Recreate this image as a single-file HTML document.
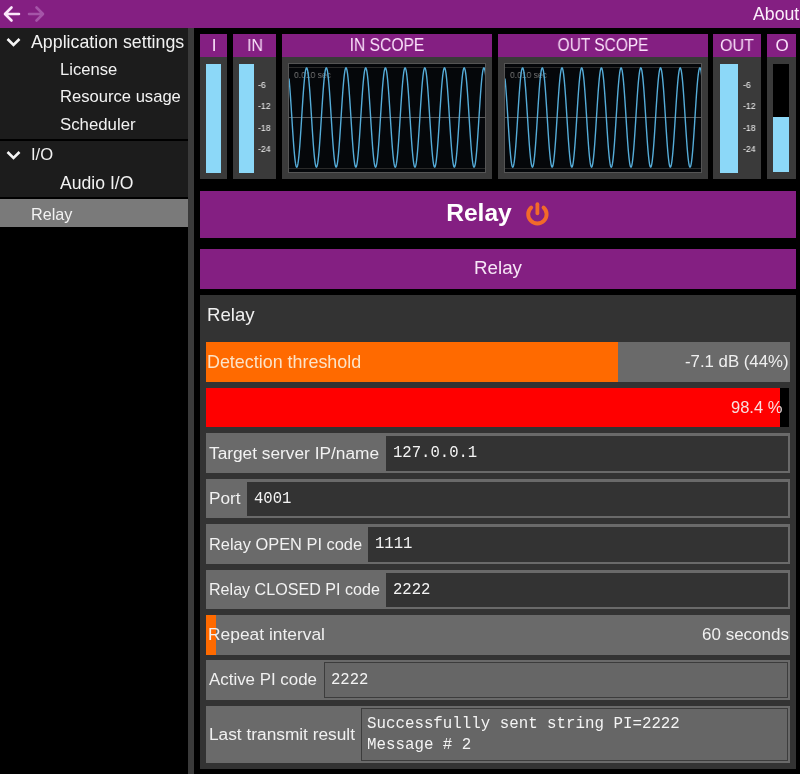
<!DOCTYPE html>
<html><head><meta charset="utf-8"><style>
html,body{margin:0;padding:0;width:800px;height:774px;overflow:hidden;background:#000;}
body>div,body>svg{position:absolute;}
body>div{will-change:transform;}
</style></head><body>
<div style="left:0px;top:0px;width:800px;height:28px;background:#841f82;"></div>
<svg style="left:0;top:0" width="60" height="28"><path d="M11.5 7.5 L5 14 L11.5 20.5 M5.5 14 H19" stroke="#fbe8fb" stroke-width="2.6" fill="none" stroke-linecap="round" stroke-linejoin="round"/><path d="M36.5 7.5 L43 14 L36.5 20.5 M42.5 14 H29" stroke="#a555a8" stroke-width="2.6" fill="none" stroke-linecap="round" stroke-linejoin="round"/></svg>
<div style="right:1px;text-align:right;top:6.22px;font-family:'Liberation Sans', sans-serif;font-size:17.7px;line-height:17.7px;color:#fbeefb;font-weight:400;white-space:pre;">About</div>
<div style="left:0px;top:28px;width:188px;height:111px;background:#1c1c1c;"></div>
<div style="left:0px;top:141px;width:188px;height:56px;background:#1c1c1c;"></div>
<div style="left:0px;top:199px;width:188px;height:28px;background:#7a7a7a;"></div>
<div style="left:188px;top:28px;width:6px;height:746px;background:#3a3a3a;"></div>
<svg style="left:6px;top:36.5px" width="20" height="12"><path d="M1.5 2 L7.5 8 L13.5 2" stroke="#f4f4f4" stroke-width="2.6" fill="none"/></svg>
<svg style="left:6px;top:150px" width="20" height="12"><path d="M1.5 2 L7.5 8 L13.5 2" stroke="#f4f4f4" stroke-width="2.6" fill="none"/></svg>
<div style="left:31px;top:33.68px;font-family:'Liberation Sans', sans-serif;font-size:17.8px;line-height:17.8px;color:#f2f2f2;font-weight:400;white-space:pre;">Application settings</div>
<div style="left:60px;top:62.15px;font-family:'Liberation Sans', sans-serif;font-size:16.6px;line-height:16.6px;color:#f2f2f2;font-weight:400;white-space:pre;">License</div>
<div style="left:60px;top:89.45px;font-family:'Liberation Sans', sans-serif;font-size:16.6px;line-height:16.6px;color:#f2f2f2;font-weight:400;white-space:pre;">Resource usage</div>
<div style="left:60px;top:116.98px;font-family:'Liberation Sans', sans-serif;font-size:16.8px;line-height:16.8px;color:#f2f2f2;font-weight:400;white-space:pre;">Scheduler</div>
<div style="left:31px;top:146.95px;font-family:'Liberation Sans', sans-serif;font-size:16.6px;line-height:16.6px;color:#f2f2f2;font-weight:400;white-space:pre;">I/O</div>
<div style="left:60px;top:174.60px;font-family:'Liberation Sans', sans-serif;font-size:17.6px;line-height:17.6px;color:#f2f2f2;font-weight:400;white-space:pre;">Audio I/O</div>
<div style="left:31px;top:205.79px;font-family:'Liberation Sans', sans-serif;font-size:16.2px;line-height:16.2px;color:#f2f2f2;font-weight:400;white-space:pre;">Relay</div>
<div style="left:200px;top:34px;width:27px;height:23px;background:#841f82;"></div>
<div style="left:200px;top:57px;width:27px;height:122px;background:#3a3a3a;"></div>
<div style="left:-86.5px;width:600px;text-align:center;top:37.01px;font-family:'Liberation Sans', sans-serif;font-size:17px;line-height:17px;color:#fbe2fb;font-weight:400;white-space:pre;">I</div>
<div style="left:233px;top:34px;width:43px;height:23px;background:#841f82;"></div>
<div style="left:233px;top:57px;width:43px;height:122px;background:#3a3a3a;"></div>
<div style="left:-45.5px;width:600px;text-align:center;top:37.01px;font-family:'Liberation Sans', sans-serif;font-size:17px;line-height:17px;color:#fbe2fb;font-weight:400;white-space:pre;transform:scaleX(0.93);transform-origin:center 50%;">IN</div>
<div style="left:282px;top:34px;width:210px;height:23px;background:#841f82;"></div>
<div style="left:282px;top:57px;width:210px;height:122px;background:#3a3a3a;"></div>
<div style="left:87.0px;width:600px;text-align:center;top:37.33px;font-family:'Liberation Sans', sans-serif;font-size:17.8px;line-height:17.8px;color:#fbe2fb;font-weight:400;white-space:pre;transform:scaleX(0.88);transform-origin:center 50%;">IN SCOPE</div>
<div style="left:498px;top:34px;width:210px;height:23px;background:#841f82;"></div>
<div style="left:498px;top:57px;width:210px;height:122px;background:#3a3a3a;"></div>
<div style="left:303.0px;width:600px;text-align:center;top:37.33px;font-family:'Liberation Sans', sans-serif;font-size:17.8px;line-height:17.8px;color:#fbe2fb;font-weight:400;white-space:pre;transform:scaleX(0.87);transform-origin:center 50%;">OUT SCOPE</div>
<div style="left:713px;top:34px;width:48px;height:23px;background:#841f82;"></div>
<div style="left:713px;top:57px;width:48px;height:122px;background:#3a3a3a;"></div>
<div style="left:437.0px;width:600px;text-align:center;top:37.01px;font-family:'Liberation Sans', sans-serif;font-size:17px;line-height:17px;color:#fbe2fb;font-weight:400;white-space:pre;transform:scaleX(0.94);transform-origin:center 50%;">OUT</div>
<div style="left:767px;top:34px;width:29px;height:23px;background:#841f82;"></div>
<div style="left:767px;top:57px;width:29px;height:122px;background:#3a3a3a;"></div>
<div style="left:481.5px;width:600px;text-align:center;top:37.01px;font-family:'Liberation Sans', sans-serif;font-size:17px;line-height:17px;color:#fbe2fb;font-weight:400;white-space:pre;">O</div>
<div style="left:206px;top:64px;width:15px;height:109px;background:#8cd8f8;"></div>
<div style="left:239px;top:64px;width:15px;height:109px;background:#8cd8f8;"></div>
<div style="left:720px;top:64px;width:18px;height:109px;background:#8cd8f8;"></div>
<div style="left:773px;top:64px;width:16px;height:108px;background:#000;"></div>
<div style="left:773px;top:117px;width:16px;height:55px;background:#8cd8f8;"></div>
<div style="left:258px;top:81.23px;font-family:'Liberation Sans', sans-serif;font-size:9.3px;line-height:9.3px;color:#f4f4f4;font-weight:400;white-space:pre;transform:scaleX(0.94);transform-origin:left 50%;">-6</div>
<div style="left:258px;top:102.43px;font-family:'Liberation Sans', sans-serif;font-size:9.3px;line-height:9.3px;color:#f4f4f4;font-weight:400;white-space:pre;transform:scaleX(0.94);transform-origin:left 50%;">-12</div>
<div style="left:258px;top:124.33px;font-family:'Liberation Sans', sans-serif;font-size:9.3px;line-height:9.3px;color:#f4f4f4;font-weight:400;white-space:pre;transform:scaleX(0.94);transform-origin:left 50%;">-18</div>
<div style="left:258px;top:145.43px;font-family:'Liberation Sans', sans-serif;font-size:9.3px;line-height:9.3px;color:#f4f4f4;font-weight:400;white-space:pre;transform:scaleX(0.94);transform-origin:left 50%;">-24</div>
<div style="left:743px;top:81.23px;font-family:'Liberation Sans', sans-serif;font-size:9.3px;line-height:9.3px;color:#f4f4f4;font-weight:400;white-space:pre;transform:scaleX(0.94);transform-origin:left 50%;">-6</div>
<div style="left:743px;top:102.43px;font-family:'Liberation Sans', sans-serif;font-size:9.3px;line-height:9.3px;color:#f4f4f4;font-weight:400;white-space:pre;transform:scaleX(0.94);transform-origin:left 50%;">-12</div>
<div style="left:743px;top:124.33px;font-family:'Liberation Sans', sans-serif;font-size:9.3px;line-height:9.3px;color:#f4f4f4;font-weight:400;white-space:pre;transform:scaleX(0.94);transform-origin:left 50%;">-18</div>
<div style="left:743px;top:145.43px;font-family:'Liberation Sans', sans-serif;font-size:9.3px;line-height:9.3px;color:#f4f4f4;font-weight:400;white-space:pre;transform:scaleX(0.94);transform-origin:left 50%;">-24</div>
<div style="left:288px;top:63px;width:198px;height:110px;background:#05070a;box-shadow:inset 0 0 0 1px #555;"></div>
<div style="left:289px;top:67px;width:196px;height:1px;background:#2a2a2a;"></div>
<div style="left:289px;top:117px;width:196px;height:1px;background:#5a5a5a;"></div>
<div style="left:289px;top:168px;width:196px;height:1px;background:#2a2a2a;"></div>
<div style="left:294px;top:69.92px;font-family:'Liberation Sans', sans-serif;font-size:9.9px;line-height:9.9px;color:#747474;font-weight:400;white-space:pre;transform:scaleX(0.86);transform-origin:left 50%;">0.010 sec</div>
<svg style="left:288.5px;top:63px" width="196.5" height="110"><polyline points="0.00,15.62 0.25,18.19 0.50,21.00 0.75,24.02 1.00,27.23 1.25,30.62 1.50,34.16 1.75,37.83 2.00,41.60 2.25,45.45 2.50,49.37 2.75,53.31 3.00,57.27 3.25,61.20 3.50,65.10 3.75,68.92 4.00,72.66 4.25,76.27 4.50,79.76 4.75,83.08 5.00,86.21 5.25,89.15 5.50,91.87 5.75,94.35 6.00,96.57 6.25,98.53 6.50,100.21 6.75,101.60 7.00,102.69 7.25,103.47 7.50,103.94 7.75,104.10 8.00,103.94 8.25,103.47 8.50,102.69 8.75,101.60 9.00,100.21 9.25,98.53 9.50,96.57 9.75,94.35 10.00,91.87 10.25,89.15 10.50,86.21 10.75,83.08 11.00,79.76 11.25,76.27 11.50,72.66 11.75,68.92 12.00,65.10 12.25,61.20 12.50,57.27 12.75,53.31 13.00,49.37 13.25,45.45 13.50,41.60 13.75,37.83 14.00,34.16 14.25,30.62 14.50,27.23 14.75,24.02 15.00,21.00 15.25,18.19 15.50,15.62 15.75,13.29 16.00,11.22 16.25,9.43 16.50,7.92 16.75,6.71 17.00,5.81 17.25,5.21 17.50,4.93 17.75,4.96 18.00,5.30 18.25,5.96 18.50,6.93 18.75,8.20 19.00,9.76 19.25,11.61 19.50,13.73 19.75,16.11 20.00,18.74 20.25,21.59 20.50,24.65 20.75,27.90 21.00,31.32 21.25,34.88 21.50,38.57 21.75,42.36 22.00,46.23 22.25,50.16 22.50,54.10 22.75,58.06 23.00,61.99 23.25,65.87 23.50,69.68 23.75,73.39 24.00,76.98 24.25,80.43 24.50,83.72 24.75,86.82 25.00,89.71 25.25,92.38 25.50,94.81 25.75,96.99 26.00,98.89 26.25,100.51 26.50,101.84 26.75,102.87 27.00,103.59 27.25,104.00 27.50,104.09 27.75,103.87 28.00,103.34 28.25,102.49 28.50,101.34 28.75,99.90 29.00,98.16 29.25,96.15 29.50,93.87 29.75,91.34 30.00,88.58 30.25,85.60 30.50,82.43 30.75,79.07 31.00,75.56 31.25,71.92 31.50,68.16 31.75,64.32 32.00,60.42 32.25,56.48 32.50,52.52 32.75,48.58 33.00,44.68 33.25,40.84 33.50,37.08 33.75,33.44 34.00,29.93 34.25,26.57 34.50,23.40 34.75,20.42 35.00,17.66 35.25,15.13 35.50,12.85 35.75,10.84 36.00,9.10 36.25,7.66 36.50,6.51 36.75,5.66 37.00,5.13 37.25,4.91 37.50,5.00 37.75,5.41 38.00,6.13 38.25,7.16 38.50,8.49 38.75,10.11 39.00,12.01 39.25,14.19 39.50,16.62 39.75,19.29 40.00,22.18 40.25,25.28 40.50,28.57 40.75,32.02 41.00,35.61 41.25,39.32 41.50,43.13 41.75,47.01 42.00,50.94 42.25,54.90 42.50,58.84 42.75,62.77 43.00,66.64 43.25,70.43 43.50,74.12 43.75,77.68 44.00,81.10 44.25,84.35 44.50,87.41 44.75,90.26 45.00,92.89 45.25,95.27 45.50,97.39 45.75,99.24 46.00,100.80 46.25,102.07 46.50,103.04 46.75,103.70 47.00,104.04 47.25,104.07 47.50,103.79 47.75,103.19 48.00,102.29 48.25,101.08 48.50,99.57 48.75,97.78 49.00,95.71 49.25,93.38 49.50,90.81 49.75,88.00 50.00,84.98 50.25,81.77 50.50,78.38 50.75,74.84 51.00,71.17 51.25,67.40 51.50,63.55 51.75,59.63 52.00,55.69 52.25,51.73 52.50,47.80 52.75,43.90 53.00,40.08 53.25,36.34 53.50,32.73 53.75,29.24 54.00,25.92 54.25,22.79 54.50,19.85 54.75,17.13 55.00,14.65 55.25,12.43 55.50,10.47 55.75,8.79 56.00,7.40 56.25,6.31 56.50,5.53 56.75,5.06 57.00,4.90 57.25,5.06 57.50,5.53 57.75,6.31 58.00,7.40 58.25,8.79 58.50,10.47 58.75,12.43 59.00,14.65 59.25,17.13 59.50,19.85 59.75,22.79 60.00,25.92 60.25,29.24 60.50,32.73 60.75,36.34 61.00,40.08 61.25,43.90 61.50,47.80 61.75,51.73 62.00,55.69 62.25,59.63 62.50,63.55 62.75,67.40 63.00,71.17 63.25,74.84 63.50,78.38 63.75,81.77 64.00,84.98 64.25,88.00 64.50,90.81 64.75,93.38 65.00,95.71 65.25,97.78 65.50,99.57 65.75,101.08 66.00,102.29 66.25,103.19 66.50,103.79 66.75,104.07 67.00,104.04 67.25,103.70 67.50,103.04 67.75,102.07 68.00,100.80 68.25,99.24 68.50,97.39 68.75,95.27 69.00,92.89 69.25,90.26 69.50,87.41 69.75,84.35 70.00,81.10 70.25,77.68 70.50,74.12 70.75,70.43 71.00,66.64 71.25,62.77 71.50,58.84 71.75,54.90 72.00,50.94 72.25,47.01 72.50,43.13 72.75,39.32 73.00,35.61 73.25,32.02 73.50,28.57 73.75,25.28 74.00,22.18 74.25,19.29 74.50,16.62 74.75,14.19 75.00,12.01 75.25,10.11 75.50,8.49 75.75,7.16 76.00,6.13 76.25,5.41 76.50,5.00 76.75,4.91 77.00,5.13 77.25,5.66 77.50,6.51 77.75,7.66 78.00,9.10 78.25,10.84 78.50,12.85 78.75,15.13 79.00,17.66 79.25,20.42 79.50,23.40 79.75,26.57 80.00,29.93 80.25,33.44 80.50,37.08 80.75,40.84 81.00,44.68 81.25,48.58 81.50,52.52 81.75,56.48 82.00,60.42 82.25,64.32 82.50,68.16 82.75,71.92 83.00,75.56 83.25,79.07 83.50,82.43 83.75,85.60 84.00,88.58 84.25,91.34 84.50,93.87 84.75,96.15 85.00,98.16 85.25,99.90 85.50,101.34 85.75,102.49 86.00,103.34 86.25,103.87 86.50,104.09 86.75,104.00 87.00,103.59 87.25,102.87 87.50,101.84 87.75,100.51 88.00,98.89 88.25,96.99 88.50,94.81 88.75,92.38 89.00,89.71 89.25,86.82 89.50,83.72 89.75,80.43 90.00,76.98 90.25,73.39 90.50,69.68 90.75,65.87 91.00,61.99 91.25,58.06 91.50,54.10 91.75,50.16 92.00,46.23 92.25,42.36 92.50,38.57 92.75,34.88 93.00,31.32 93.25,27.90 93.50,24.65 93.75,21.59 94.00,18.74 94.25,16.11 94.50,13.73 94.75,11.61 95.00,9.76 95.25,8.20 95.50,6.93 95.75,5.96 96.00,5.30 96.25,4.96 96.50,4.93 96.75,5.21 97.00,5.81 97.25,6.71 97.50,7.92 97.75,9.43 98.00,11.22 98.25,13.29 98.50,15.62 98.75,18.19 99.00,21.00 99.25,24.02 99.50,27.23 99.75,30.62 100.00,34.16 100.25,37.83 100.50,41.60 100.75,45.45 101.00,49.37 101.25,53.31 101.50,57.27 101.75,61.20 102.00,65.10 102.25,68.92 102.50,72.66 102.75,76.27 103.00,79.76 103.25,83.08 103.50,86.21 103.75,89.15 104.00,91.87 104.25,94.35 104.50,96.57 104.75,98.53 105.00,100.21 105.25,101.60 105.50,102.69 105.75,103.47 106.00,103.94 106.25,104.10 106.50,103.94 106.75,103.47 107.00,102.69 107.25,101.60 107.50,100.21 107.75,98.53 108.00,96.57 108.25,94.35 108.50,91.87 108.75,89.15 109.00,86.21 109.25,83.08 109.50,79.76 109.75,76.27 110.00,72.66 110.25,68.92 110.50,65.10 110.75,61.20 111.00,57.27 111.25,53.31 111.50,49.37 111.75,45.45 112.00,41.60 112.25,37.83 112.50,34.16 112.75,30.62 113.00,27.23 113.25,24.02 113.50,21.00 113.75,18.19 114.00,15.62 114.25,13.29 114.50,11.22 114.75,9.43 115.00,7.92 115.25,6.71 115.50,5.81 115.75,5.21 116.00,4.93 116.25,4.96 116.50,5.30 116.75,5.96 117.00,6.93 117.25,8.20 117.50,9.76 117.75,11.61 118.00,13.73 118.25,16.11 118.50,18.74 118.75,21.59 119.00,24.65 119.25,27.90 119.50,31.32 119.75,34.88 120.00,38.57 120.25,42.36 120.50,46.23 120.75,50.16 121.00,54.10 121.25,58.06 121.50,61.99 121.75,65.87 122.00,69.68 122.25,73.39 122.50,76.98 122.75,80.43 123.00,83.72 123.25,86.82 123.50,89.71 123.75,92.38 124.00,94.81 124.25,96.99 124.50,98.89 124.75,100.51 125.00,101.84 125.25,102.87 125.50,103.59 125.75,104.00 126.00,104.09 126.25,103.87 126.50,103.34 126.75,102.49 127.00,101.34 127.25,99.90 127.50,98.16 127.75,96.15 128.00,93.87 128.25,91.34 128.50,88.58 128.75,85.60 129.00,82.43 129.25,79.07 129.50,75.56 129.75,71.92 130.00,68.16 130.25,64.32 130.50,60.42 130.75,56.48 131.00,52.52 131.25,48.58 131.50,44.68 131.75,40.84 132.00,37.08 132.25,33.44 132.50,29.93 132.75,26.57 133.00,23.40 133.25,20.42 133.50,17.66 133.75,15.13 134.00,12.85 134.25,10.84 134.50,9.10 134.75,7.66 135.00,6.51 135.25,5.66 135.50,5.13 135.75,4.91 136.00,5.00 136.25,5.41 136.50,6.13 136.75,7.16 137.00,8.49 137.25,10.11 137.50,12.01 137.75,14.19 138.00,16.62 138.25,19.29 138.50,22.18 138.75,25.28 139.00,28.57 139.25,32.02 139.50,35.61 139.75,39.32 140.00,43.13 140.25,47.01 140.50,50.94 140.75,54.90 141.00,58.84 141.25,62.77 141.50,66.64 141.75,70.43 142.00,74.12 142.25,77.68 142.50,81.10 142.75,84.35 143.00,87.41 143.25,90.26 143.50,92.89 143.75,95.27 144.00,97.39 144.25,99.24 144.50,100.80 144.75,102.07 145.00,103.04 145.25,103.70 145.50,104.04 145.75,104.07 146.00,103.79 146.25,103.19 146.50,102.29 146.75,101.08 147.00,99.57 147.25,97.78 147.50,95.71 147.75,93.38 148.00,90.81 148.25,88.00 148.50,84.98 148.75,81.77 149.00,78.38 149.25,74.84 149.50,71.17 149.75,67.40 150.00,63.55 150.25,59.63 150.50,55.69 150.75,51.73 151.00,47.80 151.25,43.90 151.50,40.08 151.75,36.34 152.00,32.73 152.25,29.24 152.50,25.92 152.75,22.79 153.00,19.85 153.25,17.13 153.50,14.65 153.75,12.43 154.00,10.47 154.25,8.79 154.50,7.40 154.75,6.31 155.00,5.53 155.25,5.06 155.50,4.90 155.75,5.06 156.00,5.53 156.25,6.31 156.50,7.40 156.75,8.79 157.00,10.47 157.25,12.43 157.50,14.65 157.75,17.13 158.00,19.85 158.25,22.79 158.50,25.92 158.75,29.24 159.00,32.73 159.25,36.34 159.50,40.08 159.75,43.90 160.00,47.80 160.25,51.73 160.50,55.69 160.75,59.63 161.00,63.55 161.25,67.40 161.50,71.17 161.75,74.84 162.00,78.38 162.25,81.77 162.50,84.98 162.75,88.00 163.00,90.81 163.25,93.38 163.50,95.71 163.75,97.78 164.00,99.57 164.25,101.08 164.50,102.29 164.75,103.19 165.00,103.79 165.25,104.07 165.50,104.04 165.75,103.70 166.00,103.04 166.25,102.07 166.50,100.80 166.75,99.24 167.00,97.39 167.25,95.27 167.50,92.89 167.75,90.26 168.00,87.41 168.25,84.35 168.50,81.10 168.75,77.68 169.00,74.12 169.25,70.43 169.50,66.64 169.75,62.77 170.00,58.84 170.25,54.90 170.50,50.94 170.75,47.01 171.00,43.13 171.25,39.32 171.50,35.61 171.75,32.02 172.00,28.57 172.25,25.28 172.50,22.18 172.75,19.29 173.00,16.62 173.25,14.19 173.50,12.01 173.75,10.11 174.00,8.49 174.25,7.16 174.50,6.13 174.75,5.41 175.00,5.00 175.25,4.91 175.50,5.13 175.75,5.66 176.00,6.51 176.25,7.66 176.50,9.10 176.75,10.84 177.00,12.85 177.25,15.13 177.50,17.66 177.75,20.42 178.00,23.40 178.25,26.57 178.50,29.93 178.75,33.44 179.00,37.08 179.25,40.84 179.50,44.68 179.75,48.58 180.00,52.52 180.25,56.48 180.50,60.42 180.75,64.32 181.00,68.16 181.25,71.92 181.50,75.56 181.75,79.07 182.00,82.43 182.25,85.60 182.50,88.58 182.75,91.34 183.00,93.87 183.25,96.15 183.50,98.16 183.75,99.90 184.00,101.34 184.25,102.49 184.50,103.34 184.75,103.87 185.00,104.09 185.25,104.00 185.50,103.59 185.75,102.87 186.00,101.84 186.25,100.51 186.50,98.89 186.75,96.99 187.00,94.81 187.25,92.38 187.50,89.71 187.75,86.82 188.00,83.72 188.25,80.43 188.50,76.98 188.75,73.39 189.00,69.68 189.25,65.87 189.50,61.99 189.75,58.06 190.00,54.10 190.25,50.16 190.50,46.23 190.75,42.36 191.00,38.57 191.25,34.88 191.50,31.32 191.75,27.90 192.00,24.65 192.25,21.59 192.50,18.74 192.75,16.11 193.00,13.73 193.25,11.61 193.50,9.76 193.75,8.20 194.00,6.93 194.25,5.96 194.50,5.30 194.75,4.96 195.00,4.93 195.25,5.21 195.50,5.81 195.75,6.71 196.00,7.92 196.25,9.43 196.50,11.22 196.75,13.29 197.00,15.62" fill="none" stroke="#55acd8" stroke-width="1.4"/></svg>
<div style="left:504px;top:63px;width:198px;height:110px;background:#05070a;box-shadow:inset 0 0 0 1px #555;"></div>
<div style="left:505px;top:67px;width:196px;height:1px;background:#2a2a2a;"></div>
<div style="left:505px;top:117px;width:196px;height:1px;background:#5a5a5a;"></div>
<div style="left:505px;top:168px;width:196px;height:1px;background:#2a2a2a;"></div>
<div style="left:510px;top:69.92px;font-family:'Liberation Sans', sans-serif;font-size:9.9px;line-height:9.9px;color:#747474;font-weight:400;white-space:pre;transform:scaleX(0.86);transform-origin:left 50%;">0.010 sec</div>
<svg style="left:504.5px;top:63px" width="196.5" height="110"><polyline points="0.00,15.62 0.25,18.19 0.50,21.00 0.75,24.02 1.00,27.23 1.25,30.62 1.50,34.16 1.75,37.83 2.00,41.60 2.25,45.45 2.50,49.37 2.75,53.31 3.00,57.27 3.25,61.20 3.50,65.10 3.75,68.92 4.00,72.66 4.25,76.27 4.50,79.76 4.75,83.08 5.00,86.21 5.25,89.15 5.50,91.87 5.75,94.35 6.00,96.57 6.25,98.53 6.50,100.21 6.75,101.60 7.00,102.69 7.25,103.47 7.50,103.94 7.75,104.10 8.00,103.94 8.25,103.47 8.50,102.69 8.75,101.60 9.00,100.21 9.25,98.53 9.50,96.57 9.75,94.35 10.00,91.87 10.25,89.15 10.50,86.21 10.75,83.08 11.00,79.76 11.25,76.27 11.50,72.66 11.75,68.92 12.00,65.10 12.25,61.20 12.50,57.27 12.75,53.31 13.00,49.37 13.25,45.45 13.50,41.60 13.75,37.83 14.00,34.16 14.25,30.62 14.50,27.23 14.75,24.02 15.00,21.00 15.25,18.19 15.50,15.62 15.75,13.29 16.00,11.22 16.25,9.43 16.50,7.92 16.75,6.71 17.00,5.81 17.25,5.21 17.50,4.93 17.75,4.96 18.00,5.30 18.25,5.96 18.50,6.93 18.75,8.20 19.00,9.76 19.25,11.61 19.50,13.73 19.75,16.11 20.00,18.74 20.25,21.59 20.50,24.65 20.75,27.90 21.00,31.32 21.25,34.88 21.50,38.57 21.75,42.36 22.00,46.23 22.25,50.16 22.50,54.10 22.75,58.06 23.00,61.99 23.25,65.87 23.50,69.68 23.75,73.39 24.00,76.98 24.25,80.43 24.50,83.72 24.75,86.82 25.00,89.71 25.25,92.38 25.50,94.81 25.75,96.99 26.00,98.89 26.25,100.51 26.50,101.84 26.75,102.87 27.00,103.59 27.25,104.00 27.50,104.09 27.75,103.87 28.00,103.34 28.25,102.49 28.50,101.34 28.75,99.90 29.00,98.16 29.25,96.15 29.50,93.87 29.75,91.34 30.00,88.58 30.25,85.60 30.50,82.43 30.75,79.07 31.00,75.56 31.25,71.92 31.50,68.16 31.75,64.32 32.00,60.42 32.25,56.48 32.50,52.52 32.75,48.58 33.00,44.68 33.25,40.84 33.50,37.08 33.75,33.44 34.00,29.93 34.25,26.57 34.50,23.40 34.75,20.42 35.00,17.66 35.25,15.13 35.50,12.85 35.75,10.84 36.00,9.10 36.25,7.66 36.50,6.51 36.75,5.66 37.00,5.13 37.25,4.91 37.50,5.00 37.75,5.41 38.00,6.13 38.25,7.16 38.50,8.49 38.75,10.11 39.00,12.01 39.25,14.19 39.50,16.62 39.75,19.29 40.00,22.18 40.25,25.28 40.50,28.57 40.75,32.02 41.00,35.61 41.25,39.32 41.50,43.13 41.75,47.01 42.00,50.94 42.25,54.90 42.50,58.84 42.75,62.77 43.00,66.64 43.25,70.43 43.50,74.12 43.75,77.68 44.00,81.10 44.25,84.35 44.50,87.41 44.75,90.26 45.00,92.89 45.25,95.27 45.50,97.39 45.75,99.24 46.00,100.80 46.25,102.07 46.50,103.04 46.75,103.70 47.00,104.04 47.25,104.07 47.50,103.79 47.75,103.19 48.00,102.29 48.25,101.08 48.50,99.57 48.75,97.78 49.00,95.71 49.25,93.38 49.50,90.81 49.75,88.00 50.00,84.98 50.25,81.77 50.50,78.38 50.75,74.84 51.00,71.17 51.25,67.40 51.50,63.55 51.75,59.63 52.00,55.69 52.25,51.73 52.50,47.80 52.75,43.90 53.00,40.08 53.25,36.34 53.50,32.73 53.75,29.24 54.00,25.92 54.25,22.79 54.50,19.85 54.75,17.13 55.00,14.65 55.25,12.43 55.50,10.47 55.75,8.79 56.00,7.40 56.25,6.31 56.50,5.53 56.75,5.06 57.00,4.90 57.25,5.06 57.50,5.53 57.75,6.31 58.00,7.40 58.25,8.79 58.50,10.47 58.75,12.43 59.00,14.65 59.25,17.13 59.50,19.85 59.75,22.79 60.00,25.92 60.25,29.24 60.50,32.73 60.75,36.34 61.00,40.08 61.25,43.90 61.50,47.80 61.75,51.73 62.00,55.69 62.25,59.63 62.50,63.55 62.75,67.40 63.00,71.17 63.25,74.84 63.50,78.38 63.75,81.77 64.00,84.98 64.25,88.00 64.50,90.81 64.75,93.38 65.00,95.71 65.25,97.78 65.50,99.57 65.75,101.08 66.00,102.29 66.25,103.19 66.50,103.79 66.75,104.07 67.00,104.04 67.25,103.70 67.50,103.04 67.75,102.07 68.00,100.80 68.25,99.24 68.50,97.39 68.75,95.27 69.00,92.89 69.25,90.26 69.50,87.41 69.75,84.35 70.00,81.10 70.25,77.68 70.50,74.12 70.75,70.43 71.00,66.64 71.25,62.77 71.50,58.84 71.75,54.90 72.00,50.94 72.25,47.01 72.50,43.13 72.75,39.32 73.00,35.61 73.25,32.02 73.50,28.57 73.75,25.28 74.00,22.18 74.25,19.29 74.50,16.62 74.75,14.19 75.00,12.01 75.25,10.11 75.50,8.49 75.75,7.16 76.00,6.13 76.25,5.41 76.50,5.00 76.75,4.91 77.00,5.13 77.25,5.66 77.50,6.51 77.75,7.66 78.00,9.10 78.25,10.84 78.50,12.85 78.75,15.13 79.00,17.66 79.25,20.42 79.50,23.40 79.75,26.57 80.00,29.93 80.25,33.44 80.50,37.08 80.75,40.84 81.00,44.68 81.25,48.58 81.50,52.52 81.75,56.48 82.00,60.42 82.25,64.32 82.50,68.16 82.75,71.92 83.00,75.56 83.25,79.07 83.50,82.43 83.75,85.60 84.00,88.58 84.25,91.34 84.50,93.87 84.75,96.15 85.00,98.16 85.25,99.90 85.50,101.34 85.75,102.49 86.00,103.34 86.25,103.87 86.50,104.09 86.75,104.00 87.00,103.59 87.25,102.87 87.50,101.84 87.75,100.51 88.00,98.89 88.25,96.99 88.50,94.81 88.75,92.38 89.00,89.71 89.25,86.82 89.50,83.72 89.75,80.43 90.00,76.98 90.25,73.39 90.50,69.68 90.75,65.87 91.00,61.99 91.25,58.06 91.50,54.10 91.75,50.16 92.00,46.23 92.25,42.36 92.50,38.57 92.75,34.88 93.00,31.32 93.25,27.90 93.50,24.65 93.75,21.59 94.00,18.74 94.25,16.11 94.50,13.73 94.75,11.61 95.00,9.76 95.25,8.20 95.50,6.93 95.75,5.96 96.00,5.30 96.25,4.96 96.50,4.93 96.75,5.21 97.00,5.81 97.25,6.71 97.50,7.92 97.75,9.43 98.00,11.22 98.25,13.29 98.50,15.62 98.75,18.19 99.00,21.00 99.25,24.02 99.50,27.23 99.75,30.62 100.00,34.16 100.25,37.83 100.50,41.60 100.75,45.45 101.00,49.37 101.25,53.31 101.50,57.27 101.75,61.20 102.00,65.10 102.25,68.92 102.50,72.66 102.75,76.27 103.00,79.76 103.25,83.08 103.50,86.21 103.75,89.15 104.00,91.87 104.25,94.35 104.50,96.57 104.75,98.53 105.00,100.21 105.25,101.60 105.50,102.69 105.75,103.47 106.00,103.94 106.25,104.10 106.50,103.94 106.75,103.47 107.00,102.69 107.25,101.60 107.50,100.21 107.75,98.53 108.00,96.57 108.25,94.35 108.50,91.87 108.75,89.15 109.00,86.21 109.25,83.08 109.50,79.76 109.75,76.27 110.00,72.66 110.25,68.92 110.50,65.10 110.75,61.20 111.00,57.27 111.25,53.31 111.50,49.37 111.75,45.45 112.00,41.60 112.25,37.83 112.50,34.16 112.75,30.62 113.00,27.23 113.25,24.02 113.50,21.00 113.75,18.19 114.00,15.62 114.25,13.29 114.50,11.22 114.75,9.43 115.00,7.92 115.25,6.71 115.50,5.81 115.75,5.21 116.00,4.93 116.25,4.96 116.50,5.30 116.75,5.96 117.00,6.93 117.25,8.20 117.50,9.76 117.75,11.61 118.00,13.73 118.25,16.11 118.50,18.74 118.75,21.59 119.00,24.65 119.25,27.90 119.50,31.32 119.75,34.88 120.00,38.57 120.25,42.36 120.50,46.23 120.75,50.16 121.00,54.10 121.25,58.06 121.50,61.99 121.75,65.87 122.00,69.68 122.25,73.39 122.50,76.98 122.75,80.43 123.00,83.72 123.25,86.82 123.50,89.71 123.75,92.38 124.00,94.81 124.25,96.99 124.50,98.89 124.75,100.51 125.00,101.84 125.25,102.87 125.50,103.59 125.75,104.00 126.00,104.09 126.25,103.87 126.50,103.34 126.75,102.49 127.00,101.34 127.25,99.90 127.50,98.16 127.75,96.15 128.00,93.87 128.25,91.34 128.50,88.58 128.75,85.60 129.00,82.43 129.25,79.07 129.50,75.56 129.75,71.92 130.00,68.16 130.25,64.32 130.50,60.42 130.75,56.48 131.00,52.52 131.25,48.58 131.50,44.68 131.75,40.84 132.00,37.08 132.25,33.44 132.50,29.93 132.75,26.57 133.00,23.40 133.25,20.42 133.50,17.66 133.75,15.13 134.00,12.85 134.25,10.84 134.50,9.10 134.75,7.66 135.00,6.51 135.25,5.66 135.50,5.13 135.75,4.91 136.00,5.00 136.25,5.41 136.50,6.13 136.75,7.16 137.00,8.49 137.25,10.11 137.50,12.01 137.75,14.19 138.00,16.62 138.25,19.29 138.50,22.18 138.75,25.28 139.00,28.57 139.25,32.02 139.50,35.61 139.75,39.32 140.00,43.13 140.25,47.01 140.50,50.94 140.75,54.90 141.00,58.84 141.25,62.77 141.50,66.64 141.75,70.43 142.00,74.12 142.25,77.68 142.50,81.10 142.75,84.35 143.00,87.41 143.25,90.26 143.50,92.89 143.75,95.27 144.00,97.39 144.25,99.24 144.50,100.80 144.75,102.07 145.00,103.04 145.25,103.70 145.50,104.04 145.75,104.07 146.00,103.79 146.25,103.19 146.50,102.29 146.75,101.08 147.00,99.57 147.25,97.78 147.50,95.71 147.75,93.38 148.00,90.81 148.25,88.00 148.50,84.98 148.75,81.77 149.00,78.38 149.25,74.84 149.50,71.17 149.75,67.40 150.00,63.55 150.25,59.63 150.50,55.69 150.75,51.73 151.00,47.80 151.25,43.90 151.50,40.08 151.75,36.34 152.00,32.73 152.25,29.24 152.50,25.92 152.75,22.79 153.00,19.85 153.25,17.13 153.50,14.65 153.75,12.43 154.00,10.47 154.25,8.79 154.50,7.40 154.75,6.31 155.00,5.53 155.25,5.06 155.50,4.90 155.75,5.06 156.00,5.53 156.25,6.31 156.50,7.40 156.75,8.79 157.00,10.47 157.25,12.43 157.50,14.65 157.75,17.13 158.00,19.85 158.25,22.79 158.50,25.92 158.75,29.24 159.00,32.73 159.25,36.34 159.50,40.08 159.75,43.90 160.00,47.80 160.25,51.73 160.50,55.69 160.75,59.63 161.00,63.55 161.25,67.40 161.50,71.17 161.75,74.84 162.00,78.38 162.25,81.77 162.50,84.98 162.75,88.00 163.00,90.81 163.25,93.38 163.50,95.71 163.75,97.78 164.00,99.57 164.25,101.08 164.50,102.29 164.75,103.19 165.00,103.79 165.25,104.07 165.50,104.04 165.75,103.70 166.00,103.04 166.25,102.07 166.50,100.80 166.75,99.24 167.00,97.39 167.25,95.27 167.50,92.89 167.75,90.26 168.00,87.41 168.25,84.35 168.50,81.10 168.75,77.68 169.00,74.12 169.25,70.43 169.50,66.64 169.75,62.77 170.00,58.84 170.25,54.90 170.50,50.94 170.75,47.01 171.00,43.13 171.25,39.32 171.50,35.61 171.75,32.02 172.00,28.57 172.25,25.28 172.50,22.18 172.75,19.29 173.00,16.62 173.25,14.19 173.50,12.01 173.75,10.11 174.00,8.49 174.25,7.16 174.50,6.13 174.75,5.41 175.00,5.00 175.25,4.91 175.50,5.13 175.75,5.66 176.00,6.51 176.25,7.66 176.50,9.10 176.75,10.84 177.00,12.85 177.25,15.13 177.50,17.66 177.75,20.42 178.00,23.40 178.25,26.57 178.50,29.93 178.75,33.44 179.00,37.08 179.25,40.84 179.50,44.68 179.75,48.58 180.00,52.52 180.25,56.48 180.50,60.42 180.75,64.32 181.00,68.16 181.25,71.92 181.50,75.56 181.75,79.07 182.00,82.43 182.25,85.60 182.50,88.58 182.75,91.34 183.00,93.87 183.25,96.15 183.50,98.16 183.75,99.90 184.00,101.34 184.25,102.49 184.50,103.34 184.75,103.87 185.00,104.09 185.25,104.00 185.50,103.59 185.75,102.87 186.00,101.84 186.25,100.51 186.50,98.89 186.75,96.99 187.00,94.81 187.25,92.38 187.50,89.71 187.75,86.82 188.00,83.72 188.25,80.43 188.50,76.98 188.75,73.39 189.00,69.68 189.25,65.87 189.50,61.99 189.75,58.06 190.00,54.10 190.25,50.16 190.50,46.23 190.75,42.36 191.00,38.57 191.25,34.88 191.50,31.32 191.75,27.90 192.00,24.65 192.25,21.59 192.50,18.74 192.75,16.11 193.00,13.73 193.25,11.61 193.50,9.76 193.75,8.20 194.00,6.93 194.25,5.96 194.50,5.30 194.75,4.96 195.00,4.93 195.25,5.21 195.50,5.81 195.75,6.71 196.00,7.92 196.25,9.43 196.50,11.22 196.75,13.29 197.00,15.62" fill="none" stroke="#55acd8" stroke-width="1.4"/></svg>
<div style="left:200px;top:191px;width:596px;height:46.5px;background:#841f82;"></div>
<div style="left:178.5px;width:600px;text-align:center;top:200.68px;font-family:'Liberation Sans', sans-serif;font-size:24.6px;line-height:24.6px;color:#ffffff;font-weight:700;white-space:pre;">Relay</div>
<svg style="left:523px;top:199px" width="30" height="30"><path d="M8.24 8.46 A9.2 9.2 0 1 0 20.56 8.46" stroke="#f26a2a" stroke-width="3.9" fill="none" stroke-linecap="round"/><path d="M14.4 5.2 V14.3" stroke="#f26a2a" stroke-width="3.8" stroke-linecap="round"/></svg>
<div style="left:200px;top:249px;width:596px;height:40px;background:#841f82;"></div>
<div style="left:198px;width:600px;text-align:center;top:258.59px;font-family:'Liberation Sans', sans-serif;font-size:18.8px;line-height:18.8px;color:#f6e6f6;font-weight:400;white-space:pre;">Relay</div>
<div style="left:200px;top:294.6px;width:596px;height:474.2px;background:#333333;"></div>
<div style="left:207px;top:305.86px;font-family:'Liberation Sans', sans-serif;font-size:18.6px;line-height:18.6px;color:#f0f0f0;font-weight:400;white-space:pre;">Relay</div>
<div style="left:206px;top:342px;width:584px;height:40px;background:#6a6a6a;"></div>
<div style="left:206px;top:342px;width:411.5px;height:40px;background:#ff6a00;"></div>
<div style="left:207px;top:353.65px;font-family:'Liberation Sans', sans-serif;font-size:17.9px;line-height:17.9px;color:#fbe3c8;font-weight:400;white-space:pre;">Detection threshold</div>
<div style="right:11px;text-align:right;top:354.28px;font-family:'Liberation Sans', sans-serif;font-size:16.8px;line-height:16.8px;color:#f0f0f0;font-weight:400;white-space:pre;">-7.1 dB (44%)</div>
<div style="left:206px;top:388px;width:583px;height:39px;background:#000;"></div>
<div style="left:206px;top:388px;width:574px;height:39px;background:#ff0000;"></div>
<div style="right:17.5px;text-align:right;top:399.23px;font-family:'Liberation Sans', sans-serif;font-size:16.5px;line-height:16.5px;color:#f8e0e0;font-weight:400;white-space:pre;">98.4 %</div>
<div style="left:206px;top:433px;width:584px;height:40px;background:#6a6a6a;"></div>
<div style="left:386px;top:435.5px;width:402px;height:35px;background:#333333;"></div>
<div style="left:208.6px;top:445.36px;font-family:'Liberation Sans', sans-serif;font-size:17.3px;line-height:17.3px;color:#f2f2f2;font-weight:400;white-space:pre;">Target server IP/name</div>
<div style="left:393px;top:445.54px;font-family:'Liberation Mono', monospace;font-size:15.6px;line-height:15.6px;color:#f4f4f4;font-weight:400;white-space:pre;">127.0.0.1</div>
<div style="left:206px;top:479px;width:584px;height:39px;background:#6a6a6a;"></div>
<div style="left:247px;top:481.5px;width:541px;height:34px;background:#333333;"></div>
<div style="left:208.6px;top:489.94px;font-family:'Liberation Sans', sans-serif;font-size:17.2px;line-height:17.2px;color:#f2f2f2;font-weight:400;white-space:pre;">Port</div>
<div style="left:254px;top:491.54px;font-family:'Liberation Mono', monospace;font-size:15.6px;line-height:15.6px;color:#f4f4f4;font-weight:400;white-space:pre;">4001</div>
<div style="left:206px;top:524px;width:584px;height:40px;background:#6a6a6a;"></div>
<div style="left:368px;top:526.5px;width:420px;height:35px;background:#333333;"></div>
<div style="left:208.6px;top:535.62px;font-family:'Liberation Sans', sans-serif;font-size:16.4px;line-height:16.4px;color:#f2f2f2;font-weight:400;white-space:pre;">Relay OPEN PI code</div>
<div style="left:375px;top:536.54px;font-family:'Liberation Mono', monospace;font-size:15.6px;line-height:15.6px;color:#f4f4f4;font-weight:400;white-space:pre;">1111</div>
<div style="left:206px;top:570px;width:584px;height:39px;background:#6a6a6a;"></div>
<div style="left:386px;top:572.5px;width:402px;height:34px;background:#333333;"></div>
<div style="left:208.6px;top:581.37px;font-family:'Liberation Sans', sans-serif;font-size:16.1px;line-height:16.1px;color:#f2f2f2;font-weight:400;white-space:pre;">Relay CLOSED PI code</div>
<div style="left:393px;top:582.54px;font-family:'Liberation Mono', monospace;font-size:15.6px;line-height:15.6px;color:#f4f4f4;font-weight:400;white-space:pre;">2222</div>
<div style="left:206px;top:615px;width:584px;height:40px;background:#6a6a6a;"></div>
<div style="left:206px;top:615px;width:10px;height:40px;background:#ff6a00;"></div>
<div style="left:207.5px;top:626.07px;font-family:'Liberation Sans', sans-serif;font-size:17.4px;line-height:17.4px;color:#f0f0f0;font-weight:400;white-space:pre;">Repeat interval</div>
<div style="right:10.75px;text-align:right;top:625.81px;font-family:'Liberation Sans', sans-serif;font-size:17.0px;line-height:17.0px;color:#f0f0f0;font-weight:400;white-space:pre;">60 seconds</div>
<div style="left:206px;top:660px;width:584px;height:40px;background:#6a6a6a;"></div>
<div style="left:324px;top:662px;width:464px;height:36px;background:#666666;box-shadow:inset 0 0 0 1px #3c3c3c;"></div>
<div style="left:208.6px;top:671.89px;font-family:'Liberation Sans', sans-serif;font-size:16.9px;line-height:16.9px;color:#f0f0f0;font-weight:400;white-space:pre;">Active PI code</div>
<div style="left:331px;top:673.04px;font-family:'Liberation Mono', monospace;font-size:15.6px;line-height:15.6px;color:#f4f4f4;font-weight:400;white-space:pre;">2222</div>
<div style="left:206px;top:706px;width:584px;height:57px;background:#6a6a6a;"></div>
<div style="left:361px;top:708px;width:427px;height:53px;background:#666666;box-shadow:inset 0 0 0 1px #3c3c3c;"></div>
<div style="left:208.6px;top:726.36px;font-family:'Liberation Sans', sans-serif;font-size:17.3px;line-height:17.3px;color:#f0f0f0;font-weight:400;white-space:pre;">Last transmit result</div>
<div style="left:367.25px;top:717.39px;font-family:'Liberation Mono', monospace;font-size:15.8px;line-height:15.8px;color:#f4f4f4;font-weight:400;white-space:pre;">Successfullly sent string PI=2222</div>
<div style="left:367.25px;top:737.69px;font-family:'Liberation Mono', monospace;font-size:15.8px;line-height:15.8px;color:#f4f4f4;font-weight:400;white-space:pre;">Message # 2</div>
</body></html>
